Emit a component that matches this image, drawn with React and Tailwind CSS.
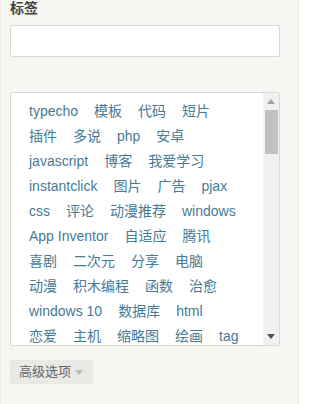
// Tag cloud shown under the tag input
const tags = [
  "typecho", "模板", "代码", "短片",
  "插件", "多说", "php", "安卓",
  "javascript", "博客", "我爱学习",
  "instantclick", "图片", "广告", "pjax",
  "css", "评论", "动漫推荐", "windows",
  "App Inventor", "自适应", "腾讯",
  "喜剧", "二次元", "分享", "电脑",
  "动漫", "积木编程", "函数", "治愈",
  "windows 10", "数据库", "html",
  "恋爱", "主机", "缩略图", "绘画", "tag",
];

const Triangle = ({ up, color }) => (
  <svg width="8" height="5" viewBox="0 0 8 5" className="block">
    <path d={up ? "M0 5 L4 0 L8 5 Z" : "M0 0 L4 5 L8 0 Z"} fill={color} />
  </svg>
);

// Fake classic scrollbar so the shot doesn't depend on the browser's own
const ScrollBar = () => (
  <div className="w-[16px] bg-[#f1f1f1] flex flex-col items-center">
    <div className="h-[17px] flex items-center justify-center">
      <Triangle up color="#a3a3a3" />
    </div>
    <div className="w-[13px] h-[44px] bg-[#c1c1c1]" />
    <div className="flex-1" />
    <div className="h-[17px] flex items-center justify-center">
      <Triangle color="#505050" />
    </div>
  </div>
);

export default function App() {
  return (
    <div
      className="w-[299px] h-[404px] bg-[#f6f6f3] border-x border-dotted border-[#e4e4e0] overflow-hidden"
      style={{ fontFamily: '"Liberation Sans", Arial, "Noto Sans CJK SC", sans-serif' }}
    >
      <div className="pl-[9px] pr-[18px]">
        <label className="block text-[14px] leading-[16px] font-bold text-[#444]">标签</label>
        <input
          type="text"
          className="block mt-[9px] w-full h-[32px] bg-white border border-[#d9d9d6] rounded-[2px] outline-none"
        />

        <div className="mt-[35px] h-[254px] flex bg-white border border-[#d9d9d6] rounded-[2px] overflow-hidden">
          <div className="flex-1 overflow-hidden pl-[18px] pt-[6px]">
            <ul className="flex flex-wrap gap-x-4 w-[216px]">
              {tags.map((tag) => (
                <li key={tag} className="text-[14px] leading-[25px] text-[#467b96] whitespace-nowrap">
                  {tag}
                </li>
              ))}
            </ul>
          </div>
          <ScrollBar />
        </div>

        <button className="mt-[14px] h-[24px] flex items-center gap-[4px] pl-[9px] pr-[10px] bg-[#e9e9e6] rounded-[2px] text-[13px] text-[#666]">
          高级选项
          <Triangle color="#bbbbbb" />
        </button>
      </div>
    </div>
  );
}
